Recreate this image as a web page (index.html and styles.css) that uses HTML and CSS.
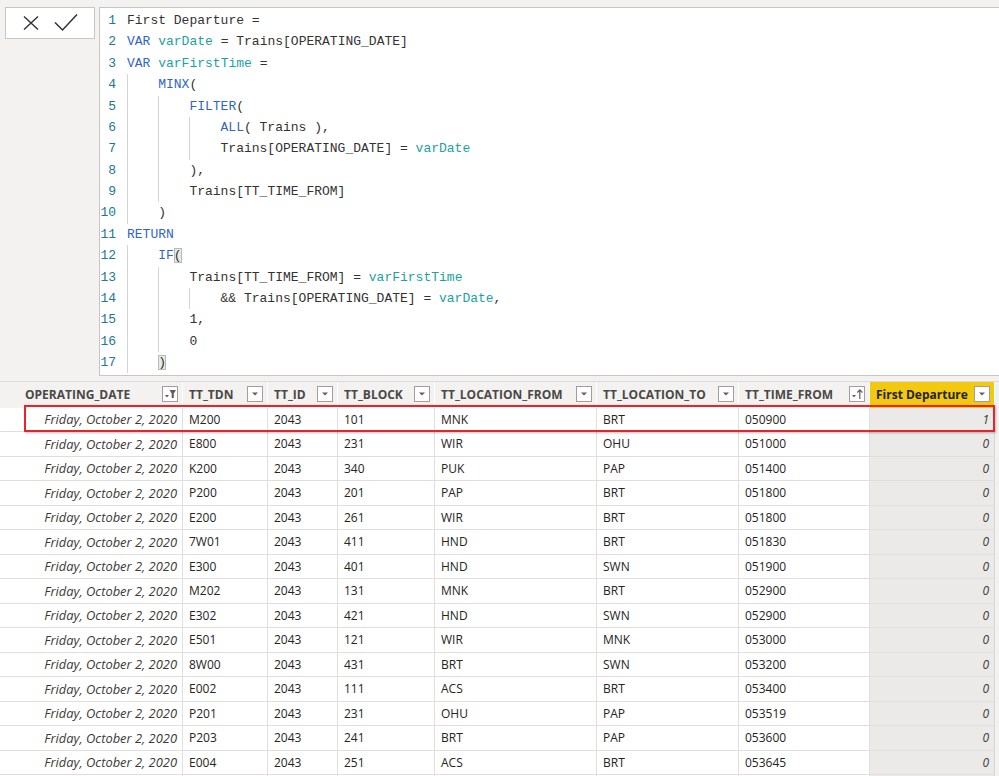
FILE: index.html
```html
<!DOCTYPE html>
<html>
<head>
<meta charset="utf-8">
<link rel="stylesheet" href="styles.css">
</head>
<body>
<div class="top">
  <div class="toolbar">
    <span class="tbtn">
      <svg width="20" height="20" viewBox="0 0 20 20"><path d="M3 3.5 L17 16.5 M17 3.5 L3 16.5" stroke="#323130" stroke-width="1.4" fill="none"/></svg>
    </span>
    <span class="tbtn">
      <svg width="26" height="20" viewBox="0 0 26 20"><path d="M2 9.5 L9.5 17 L24 1.5" stroke="#323130" stroke-width="1.5" fill="none"/></svg>
    </span>
  </div>
  <div class="editor">
    <div class="line"><span class="ln">1</span><span class="code">First Departure =</span></div>
    <div class="line"><span class="ln">2</span><span class="code"><span class="kw">VAR</span> <span class="var">varDate</span> = Trains[OPERATING_DATE]</span></div>
    <div class="line"><span class="ln">3</span><span class="code"><span class="kw">VAR</span> <span class="var">varFirstTime</span> =</span></div>
    <div class="line"><span class="ln">4</span><span class="ind"></span><span class="code"><span class="kw">MINX</span>(</span></div>
    <div class="line"><span class="ln">5</span><span class="ind"></span><span class="ind"></span><span class="code"><span class="kw">FILTER</span>(</span></div>
    <div class="line"><span class="ln">6</span><span class="ind"></span><span class="ind"></span><span class="ind"></span><span class="code"><span class="kw">ALL</span>( Trains ),</span></div>
    <div class="line"><span class="ln">7</span><span class="ind"></span><span class="ind"></span><span class="ind"></span><span class="code">Trains[OPERATING_DATE] = <span class="var">varDate</span></span></div>
    <div class="line"><span class="ln">8</span><span class="ind"></span><span class="ind"></span><span class="code">),</span></div>
    <div class="line"><span class="ln">9</span><span class="ind"></span><span class="ind"></span><span class="code">Trains[TT_TIME_FROM]</span></div>
    <div class="line"><span class="ln">10</span><span class="ind"></span><span class="code">)</span></div>
    <div class="line"><span class="ln">11</span><span class="code"><span class="kw">RETURN</span></span></div>
    <div class="line"><span class="ln">12</span><span class="ind"></span><span class="code"><span class="kw">IF</span><span class="br">(</span></span></div>
    <div class="line"><span class="ln">13</span><span class="ind"></span><span class="ind"></span><span class="code">Trains[TT_TIME_FROM] = <span class="var">varFirstTime</span></span></div>
    <div class="line"><span class="ln">14</span><span class="ind"></span><span class="ind"></span><span class="ind"></span><span class="code">&amp;&amp; Trains[OPERATING_DATE] = <span class="var">varDate</span>,</span></div>
    <div class="line"><span class="ln">15</span><span class="ind"></span><span class="ind"></span><span class="code">1,</span></div>
    <div class="line"><span class="ln">16</span><span class="ind"></span><span class="ind"></span><span class="code">0</span></div>
    <div class="line"><span class="ln">17</span><span class="ind"></span><span class="code"><span class="br">)</span></span></div>
  </div>
</div>

<div class="table">
  <div class="row head">
    <div class="hc first-col"><span class="ht">OPERATING_DATE</span>
      <span class="dd"><svg width="16" height="16" viewBox="0 0 16 16"><rect x="0.5" y="0.5" width="15" height="15" fill="#fff" stroke="#a19f9d"/><path d="M3 9 L7 9 L5 11.5 Z" fill="#605e5c"/><path d="M7.5 4 L14 4 L11.8 7.5 L11.8 12 L9.7 12 L9.7 7.5 Z" fill="#605e5c"/></svg></span></div>
    <div class="hc"><span class="ht">TT_TDN</span><span class="dd"><svg width="16" height="16" viewBox="0 0 16 16"><rect x="0.5" y="0.5" width="15" height="15" fill="#fff" stroke="#a19f9d"/><path d="M5 6.5 L11 6.5 L8 9.5 Z" fill="#605e5c"/></svg></span></div>
    <div class="hc"><span class="ht">TT_ID</span><span class="dd"><svg width="16" height="16" viewBox="0 0 16 16"><rect x="0.5" y="0.5" width="15" height="15" fill="#fff" stroke="#a19f9d"/><path d="M5 6.5 L11 6.5 L8 9.5 Z" fill="#605e5c"/></svg></span></div>
    <div class="hc"><span class="ht">TT_BLOCK</span><span class="dd"><svg width="16" height="16" viewBox="0 0 16 16"><rect x="0.5" y="0.5" width="15" height="15" fill="#fff" stroke="#a19f9d"/><path d="M5 6.5 L11 6.5 L8 9.5 Z" fill="#605e5c"/></svg></span></div>
    <div class="hc"><span class="ht">TT_LOCATION_FROM</span><span class="dd"><svg width="16" height="16" viewBox="0 0 16 16"><rect x="0.5" y="0.5" width="15" height="15" fill="#fff" stroke="#a19f9d"/><path d="M5 6.5 L11 6.5 L8 9.5 Z" fill="#605e5c"/></svg></span></div>
    <div class="hc"><span class="ht">TT_LOCATION_TO</span><span class="dd"><svg width="16" height="16" viewBox="0 0 16 16"><rect x="0.5" y="0.5" width="15" height="15" fill="#fff" stroke="#a19f9d"/><path d="M5 6.5 L11 6.5 L8 9.5 Z" fill="#605e5c"/></svg></span></div>
    <div class="hc"><span class="ht">TT_TIME_FROM</span><span class="dd"><svg width="16" height="16" viewBox="0 0 16 16"><rect x="0.5" y="0.5" width="15" height="15" fill="#fff" stroke="#a19f9d"/><path d="M3 9 L7 9 L5 11.5 Z" fill="#605e5c"/><path d="M10.8 13 L10.8 4 M8.3 6.5 L10.8 3.8 L13.3 6.5" stroke="#605e5c" stroke-width="1.2" fill="none"/></svg></span></div>
    <div class="hc calc"><span class="ht">First Departure</span><span class="dd"><svg width="16" height="16" viewBox="0 0 16 16"><rect x="0.5" y="0.5" width="15" height="15" fill="#fff" stroke="#a19f9d"/><path d="M5 6.5 L11 6.5 L8 9.5 Z" fill="#605e5c"/></svg></span></div>
  </div>

  <div class="row"><div class="c date">Friday, October 2, 2020</div><div class="c">M200</div><div class="c">2043</div><div class="c">101</div><div class="c">MNK</div><div class="c">BRT</div><div class="c">050900</div><div class="c num">1</div></div>
  <div class="row"><div class="c date">Friday, October 2, 2020</div><div class="c">E800</div><div class="c">2043</div><div class="c">231</div><div class="c">WIR</div><div class="c">OHU</div><div class="c">051000</div><div class="c num">0</div></div>
  <div class="row"><div class="c date">Friday, October 2, 2020</div><div class="c">K200</div><div class="c">2043</div><div class="c">340</div><div class="c">PUK</div><div class="c">PAP</div><div class="c">051400</div><div class="c num">0</div></div>
  <div class="row"><div class="c date">Friday, October 2, 2020</div><div class="c">P200</div><div class="c">2043</div><div class="c">201</div><div class="c">PAP</div><div class="c">BRT</div><div class="c">051800</div><div class="c num">0</div></div>
  <div class="row"><div class="c date">Friday, October 2, 2020</div><div class="c">E200</div><div class="c">2043</div><div class="c">261</div><div class="c">WIR</div><div class="c">BRT</div><div class="c">051800</div><div class="c num">0</div></div>
  <div class="row"><div class="c date">Friday, October 2, 2020</div><div class="c">7W01</div><div class="c">2043</div><div class="c">411</div><div class="c">HND</div><div class="c">BRT</div><div class="c">051830</div><div class="c num">0</div></div>
  <div class="row"><div class="c date">Friday, October 2, 2020</div><div class="c">E300</div><div class="c">2043</div><div class="c">401</div><div class="c">HND</div><div class="c">SWN</div><div class="c">051900</div><div class="c num">0</div></div>
  <div class="row"><div class="c date">Friday, October 2, 2020</div><div class="c">M202</div><div class="c">2043</div><div class="c">131</div><div class="c">MNK</div><div class="c">BRT</div><div class="c">052900</div><div class="c num">0</div></div>
  <div class="row"><div class="c date">Friday, October 2, 2020</div><div class="c">E302</div><div class="c">2043</div><div class="c">421</div><div class="c">HND</div><div class="c">SWN</div><div class="c">052900</div><div class="c num">0</div></div>
  <div class="row"><div class="c date">Friday, October 2, 2020</div><div class="c">E501</div><div class="c">2043</div><div class="c">121</div><div class="c">WIR</div><div class="c">MNK</div><div class="c">053000</div><div class="c num">0</div></div>
  <div class="row"><div class="c date">Friday, October 2, 2020</div><div class="c">8W00</div><div class="c">2043</div><div class="c">431</div><div class="c">BRT</div><div class="c">SWN</div><div class="c">053200</div><div class="c num">0</div></div>
  <div class="row"><div class="c date">Friday, October 2, 2020</div><div class="c">E002</div><div class="c">2043</div><div class="c">111</div><div class="c">ACS</div><div class="c">BRT</div><div class="c">053400</div><div class="c num">0</div></div>
  <div class="row"><div class="c date">Friday, October 2, 2020</div><div class="c">P201</div><div class="c">2043</div><div class="c">231</div><div class="c">OHU</div><div class="c">PAP</div><div class="c">053519</div><div class="c num">0</div></div>
  <div class="row"><div class="c date">Friday, October 2, 2020</div><div class="c">P203</div><div class="c">2043</div><div class="c">241</div><div class="c">BRT</div><div class="c">PAP</div><div class="c">053600</div><div class="c num">0</div></div>
  <div class="row"><div class="c date">Friday, October 2, 2020</div><div class="c">E004</div><div class="c">2043</div><div class="c">251</div><div class="c">ACS</div><div class="c">BRT</div><div class="c">053645</div><div class="c num">0</div></div>
  <div class="row"><div class="c date"></div><div class="c"></div><div class="c"></div><div class="c"></div><div class="c"></div><div class="c"></div><div class="c"></div><div class="c num"></div></div>

  <div class="highlight"></div>
</div>
</body>
</html>
```

FILE: styles.css
```css
html, body {
  margin: 0;
  padding: 0;
  background: #f3f2f1;
  width: 999px;
  height: 776px;
  overflow: hidden;
}

.top {
  display: flex;
  align-items: flex-start;
  padding: 7px 0 0 5px;
  gap: 4px;
  height: 374px;
}

.toolbar {
  width: 88px;
  height: 30px;
  background: #fff;
  border: 1px solid #c8c6c4;
  display: flex;
  align-items: center;
  justify-content: center;
  gap: 12px;
}

.tbtn {
  display: flex;
  align-items: center;
  justify-content: center;
}

.editor {
  flex: 1;
  height: 365px;
  background: #fff;
  border: 1px solid #c8c6c4;
  border-right: none;
  padding-top: 2px;
  font-family: "Liberation Mono", "DejaVu Sans Mono", monospace;
  font-size: 13px;
  color: #333333;
}

.line {
  display: flex;
  height: 21.375px;
  line-height: 21.375px;
  white-space: pre;
}

.ln {
  width: 16px;
  padding-right: 11px;
  text-align: right;
  color: #237893;
  flex: none;
}

.ind {
  width: 31.2px;
  flex: none;
  box-sizing: border-box;
  border-left: 1px solid #d4d4d4;
}

.code {
  flex: none;
}

.kw { color: #3165c4; }
.var { color: #1ba2a2; }
.br {
  background: #e4ece4;
  outline: 1px solid #b9b9b9;
  outline-offset: -1px;
}

.table {
  position: relative;
  border-top: 1px solid #dcdcdc;
  font-family: "Open Sans", "Noto Sans", sans-serif;
  font-size: 12px;
  color: #252423;
}

.row {
  display: grid;
  grid-template-columns: 183px 85px 70px 97px 162px 142px 131px 125px;
  height: 24.5px;
}

.row.head {
  height: 25.5px;
  background: #f3f2f1;
}

.hc {
  display: flex;
  align-items: center;
  justify-content: space-between;
  padding: 0 4px 1px 6px;
  font-weight: 700;
  color: #4a4847;
  border-right: 1px solid #ffffff;
  box-sizing: border-box;
}

.hc.first-col {
  padding-left: 25px;
}

.hc.calc {
  background: #f2c811;
  color: #252423;
}

.ht {
  white-space: nowrap;
}

.dd {
  display: flex;
  width: 16px;
  height: 16px;
}

.c {
  background: #fff;
  border-right: 1px solid #e1dfdd;
  border-bottom: 1px solid #e1dfdd;
  box-sizing: border-box;
  padding: 0 6px;
  display: flex;
  align-items: center;
  white-space: nowrap;
  overflow: hidden;
}

.c.date {
  justify-content: flex-end;
  font-style: italic;
  font-size: 12.9px;
  color: #3b3a39;
  padding-right: 5px;
}

.c.num {
  background: #ebeae9;
  justify-content: flex-end;
  font-style: italic;
  color: #3b3a39;
  padding-right: 5px;
  border-right: 1px solid #d8d6d4;
}

.highlight {
  position: absolute;
  left: 24px;
  top: 23px;
  width: 971px;
  height: 27px;
  box-sizing: border-box;
  border: 2px solid #e3262b;
  box-shadow: 1px 1px 2px rgba(0,0,0,0.25);
  pointer-events: none;
}
```
